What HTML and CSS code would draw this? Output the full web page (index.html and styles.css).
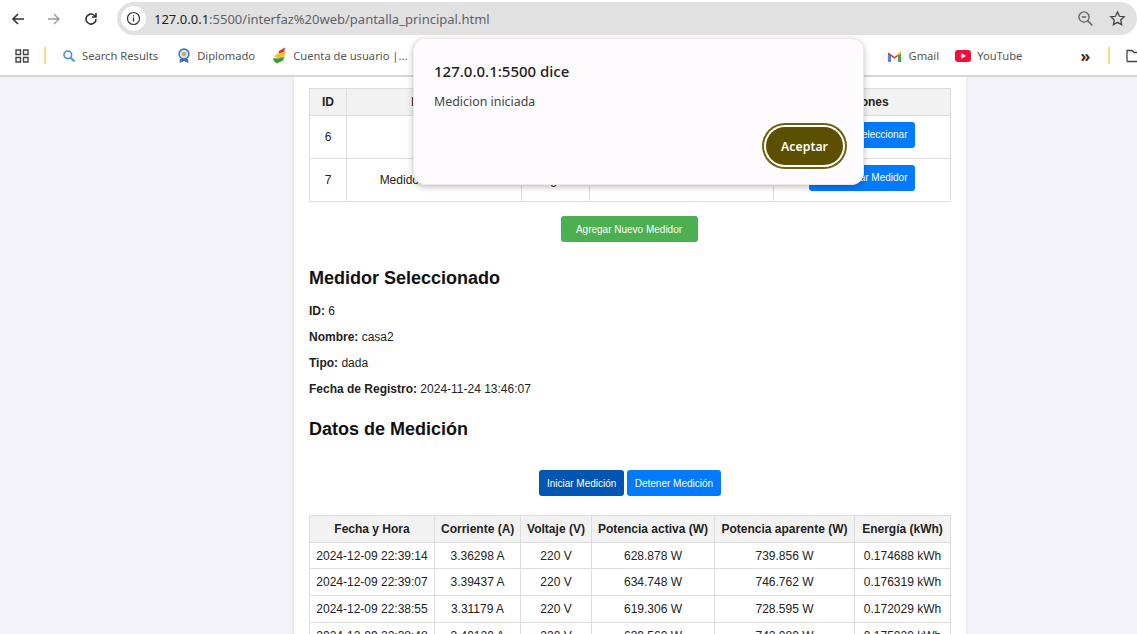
FILE: index.html
```html
<!DOCTYPE html>
<html lang="en">
<head>
    <meta charset="UTF-8">
    <title>Pantalla Principal</title>
    <link rel="stylesheet" href="styles.css">
</head>
<body>
    <header class="browser">
        <div class="toolbar">
            <svg class="nav-icon" viewBox="0 0 16 16"><path d="M14 8H3M8 3L3 8l5 5" fill="none" stroke="#333" stroke-width="1.6"/></svg>
            <svg class="nav-icon" viewBox="0 0 16 16"><path d="M2 8h11M8 3l5 5-5 5" fill="none" stroke="#999" stroke-width="1.4"/></svg>
            <svg class="nav-icon nav-reload" viewBox="0 0 16 16"><path d="M13 8a5 5 0 1 1-1.5-3.5L13 6M13 2v4H9" fill="none" stroke="#333" stroke-width="1.6"/></svg>
            <div class="omnibox">
                <span class="site-info">
                    <svg viewBox="0 0 16 16" width="15" height="15"><circle cx="8" cy="8" r="6.4" fill="none" stroke="#333" stroke-width="1.3"/><path d="M8 7v4.2M8 4.4v1.5" stroke="#333" stroke-width="1.4"/></svg>
                </span>
                <span class="url"><b>127.0.0.1</b>:5500/interfaz%20web/pantalla_principal.html</span>
                <svg class="omni-icon" viewBox="0 0 16 16"><circle cx="6.6" cy="6.6" r="4.8" fill="none" stroke="#666" stroke-width="1.3"/><path d="M10 10l4.5 4.5M4.5 6.6h4.2" stroke="#666" stroke-width="1.4"/></svg>
                <svg class="omni-icon" viewBox="0 0 16 16"><path d="M8 1.8l1.9 4.1 4.4.5-3.3 3 .9 4.4L8 11.6l-3.9 2.2.9-4.4-3.3-3 4.4-.5z" fill="none" stroke="#444" stroke-width="1.2"/></svg>
            </div>
        </div>
        <div class="bookmarks">
            <svg class="apps" viewBox="0 0 14 14"><path d="M1 1h4.5v4.5H1zM8.500 1H13v4.500H8.500zM1 8.500h4.500V13H1zM8.500 8.500H13V13H8.500z" fill="none" stroke="#444" stroke-width="1.4"/></svg>
            <span class="divider"></span>
            <a class="mark mark-search"><svg viewBox="0 0 14 14" width="14" height="14"><circle cx="5.800" cy="5.800" r="3.800" fill="none" stroke="#4a90e2" stroke-width="1.600"/><path d="M8.500 8.500l4 4" stroke="#4a90e2" stroke-width="1.800"/></svg>Search Results</a>
            <a class="mark mark-diplomado"><svg viewBox="0 0 14 16" width="14" height="16"><circle cx="7" cy="6" r="5" fill="#cfe0f2" stroke="#3f6fa8" stroke-width="1.400"/><circle cx="7" cy="6" r="2" fill="#c9a63d"/><path d="M3 11l-.5 4L7 13l4.500 2-.5-4" fill="#3f6fa8"/></svg>Diplomado</a>
            <a class="mark mark-cuenta"><svg viewBox="0 0 15 17" width="15" height="17"><path d="M7 4l6-3.500-.5 4L6 8z" fill="#d8382b"/><path d="M2 9l5-3 7-1-1.500 4-7 2.500z" fill="#f1c31f"/><path d="M1 11l5 .5 6.500-2-1.500 4-6 3-3-2z" fill="#3f9b3c"/></svg>Cuenta de usuario |...</a>
            <span class="mark-spacer"></span>
            <a class="mark mark-gmail"><svg viewBox="0 0 16 12" width="15" height="12"><path d="M1 12V2l7 5 7-5v10h-3V6L8 9 4 6v6z" fill="#d93025"/><path d="M1 12h3V6L1 3.500z" fill="#4285f4"/><path d="M15 12h-3V6l3-2.500z" fill="#34a853"/><path d="M12 6l3-2.500V1l-3 2z" fill="#fbbc04"/></svg>Gmail</a>
            <a class="mark mark-youtube"><svg viewBox="0 0 16 12" width="16" height="12"><rect width="16" height="12" rx="3" fill="#f00f3c"/><path d="M6.300 3.300v5.400L11 6z" fill="#fff"/></svg>YouTube</a>
            <span class="chevrons">»</span>
            <span class="divider divider-end"></span>
            <svg class="folder" viewBox="0 0 16 14"><path d="M1 12.500V1.500h5l2 2h8M1 12.500h15" fill="none" stroke="#444" stroke-width="1.300"/></svg>
        </div>
    </header>

    <main class="viewport">
        <div class="container">
            <table class="meters">
                <thead>
                    <tr><th class="c-id">ID</th><th class="c-name">Nombre</th><th class="c-type">Tipo</th><th class="c-date">Fecha de Registro</th><th>Acciones</th></tr>
                </thead>
                <tbody>
                    <tr>
                        <td>6</td><td>casa2</td><td>dada</td><td>2024-11-24 13:46:07</td>
                        <td class="c-actions"><button class="btn">Seleccionar</button></td>
                    </tr>
                    <tr>
                        <td>7</td><td>Medidor Residencial</td><td>Digital</td><td>2024-11-24 13:50:12</td>
                        <td class="c-actions"><button class="btn">Seleccionar Medidor</button></td>
                    </tr>
                </tbody>
            </table>

            <div class="center add-row"><button class="btn btn-green">Agregar Nuevo Medidor</button></div>

            <h2>Medidor Seleccionado</h2>
            <p><strong>ID:</strong> 6</p>
            <p><strong>Nombre:</strong> casa2</p>
            <p><strong>Tipo:</strong> dada</p>
            <p><strong>Fecha de Registro:</strong> 2024-11-24 13:46:07</p>

            <h2 class="data-title">Datos de Medición</h2>
            <div class="center actions">
                <button class="btn btn-active">Iniciar Medición</button>
                <button class="btn">Detener Medición</button>
            </div>

            <table class="readings">
                <thead>
                    <tr><th>Fecha y Hora</th><th>Corriente (A)</th><th>Voltaje (V)</th><th>Potencia activa (W)</th><th>Potencia aparente (W)</th><th>Energía (kWh)</th></tr>
                </thead>
                <tbody>
                    <tr><td>2024-12-09 22:39:14</td><td>3.36298 A</td><td>220 V</td><td>628.878 W</td><td>739.856 W</td><td>0.174688 kWh</td></tr>
                    <tr><td>2024-12-09 22:39:07</td><td>3.39437 A</td><td>220 V</td><td>634.748 W</td><td>746.762 W</td><td>0.176319 kWh</td></tr>
                    <tr><td>2024-12-09 22:38:55</td><td>3.31179 A</td><td>220 V</td><td>619.306 W</td><td>728.595 W</td><td>0.172029 kWh</td></tr>
                    <tr><td>2024-12-09 22:38:48</td><td>3.40120 A</td><td>220 V</td><td>630.560 W</td><td>742.080 W</td><td>0.175020 kWh</td></tr>
                </tbody>
            </table>
        </div>
    </main>

    <!-- alert dialog -->
    <div class="dialog">
        <h3>127.0.0.1:5500 dice</h3>
        <p>Medicion iniciada</p>
        <div class="dialog-foot"><button class="accept">Aceptar</button></div>
    </div>
</body>
</html>
```

FILE: styles.css
```css
html, body {
    margin: 0;
    height: 634px;
    overflow: hidden;
}

body {
    font-family: 'Liberation Sans', Arial, sans-serif;
    background: #f3f2f8;
    color: #222;
}

/* Browser chrome */
.browser {
    height: 77px;
    background: #fff;
    border-bottom: 2px solid #d6d6d8;
    box-sizing: border-box;
}

.toolbar {
    display: flex;
    align-items: center;
    height: 37px;
    padding: 0 0 0 10px;
}

.nav-icon {
    width: 16px;
    height: 16px;
    margin-right: 20px;
}

.nav-reload {
    margin-left: 1px;
    margin-right: 19px;
}

.omnibox {
    flex: 1;
    height: 33px;
    margin-left: -1px;
    background: #e1e1e1;
    border-radius: 17px;
    display: flex;
    align-items: center;
    padding: 0 11px 0 4px;
    font-family: 'Noto Sans', sans-serif;
}

.site-info {
    width: 25px;
    height: 25px;
    border-radius: 50%;
    background: #fff;
    display: flex;
    align-items: center;
    justify-content: center;
}

.url {
    flex: 1;
    margin-left: 8px;
    font-size: 13px;
    color: #5f6368;
}

.url b {
    font-weight: 400;
    color: #222;
}

.omni-icon {
    width: 17px;
    height: 17px;
    margin-left: 15px;
}

.bookmarks {
    display: flex;
    align-items: center;
    height: 37px;
    padding-left: 15px;
    font-family: 'Noto Sans', sans-serif;
    font-size: 11.200px;
    color: #555;
    white-space: nowrap;
}

.apps {
    flex: none;
    width: 14px;
    height: 14px;
}

.divider {
    flex: none;
    width: 2px;
    height: 17px;
    margin-left: 15px;
    background: #f7dc7c;
}

.divider-end {
    margin-left: 17px;
}

.mark {
    flex: none;
    display: flex;
    align-items: center;
    gap: 6px;
}

.mark-search { margin-left: 16px; }
.mark-diplomado { margin-left: 19px; }
.mark-cuenta { margin-left: 17px; }
.mark-spacer { flex: none; width: 480px; }
.mark-youtube { margin-left: 16px; }

.chevrons {
    flex: none;
    width: 12px;
    margin-left: 57px;
    text-align: center;
    font-size: 16px;
    font-weight: 700;
    color: #333;
}

.folder {
    flex: none;
    width: 16px;
    height: 14px;
    margin-left: 16px;
}

/* Page */
.viewport {
    height: 557px;
    overflow: hidden;
}

.container {
    width: 642px;
    margin-left: 294px;
    padding: 11px 15px 0;
    background: #fff;
    box-shadow: 0 0 3px rgba(0, 0, 0, 0.1);
    font-size: 12px;
}

table {
    width: 100%;
    border-collapse: collapse;
    table-layout: fixed;
}

th, td {
    border: 1px solid #ddd;
    padding: 0 6px;
    text-align: center;
    color: #222;
}

th {
    background: #f2f2f2;
    font-weight: 700;
}

.meters th { height: 26px; }
.meters td { height: 42px; }
.c-id { width: 24px; }
.c-name { width: 162px; }
.c-type { width: 55px; }
.c-date { width: 171px; }

.meters .c-actions {
    padding-right: 35px;
    text-align: right;
}

.meters .btn {
    margin-bottom: 5px;
}

.readings th { height: 26px; white-space: nowrap; }
.readings td { height: 26px; white-space: nowrap; }
.readings tbody tr:first-child td { height: 25px; }
.readings th:nth-child(1) { width: 112px; }
.readings th:nth-child(2) { width: 73px; }
.readings th:nth-child(3) { width: 58px; }
.readings th:nth-child(4) { width: 110px; }
.readings th:nth-child(5) { width: 127px; }

.btn {
    height: 26px;
    padding: 0 7.500px;
    border: 0;
    border-radius: 3px;
    background: #007bff;
    color: #fff;
    font-family: 'Liberation Sans', Arial, sans-serif;
    font-size: 10px;
    vertical-align: middle;
}

.btn-green {
    width: 137px;
    margin-right: 2px;
    background: #4caf50;
}

.btn-active {
    background: #0056b3;
}

.center {
    text-align: center;
}

.add-row {
    margin-top: 14px;
}

h2 {
    margin: 26px 0 15px;
    font-size: 18px;
    line-height: 21px;
    color: #111;
}

.container p {
    margin: 0 0 12px;
    line-height: 14px;
}

.data-title {
    margin-top: 23px;
}

.actions {
    margin-top: 30px;
    margin-bottom: 19px;
}

/* Alert dialog, over the page */
.dialog {
    position: absolute;
    left: 413px;
    top: 38px;
    width: 451px;
    height: 147px;
    box-sizing: border-box;
    padding: 24px 20px 0 20px;
    background: #fefbfe;
    border: 1px solid #eee9e2;
    border-radius: 12px;
    box-shadow: 0 2px 6px rgba(0, 0, 0, 0.25);
    font-family: 'Noto Sans', sans-serif;
}

.dialog h3 {
    margin: 0;
    font-size: 15px;
    line-height: 17px;
    font-weight: 500;
    color: #222;
}

.dialog p {
    margin: 14px 0 0;
    font-size: 12.400px;
    line-height: 16px;
    color: #444;
}

.dialog-foot {
    display: flex;
    justify-content: flex-end;
    margin-top: 17px;
}

.accept {
    width: 77px;
    height: 38px;
    border: 0;
    border-radius: 19px;
    background: #5c5000;
    color: #fff;
    font-family: 'Noto Sans', sans-serif;
    font-size: 12.300px;
    font-weight: 600;
    box-shadow: 0 0 0 2px #fff, 0 0 0 4px #6d6010;
}
```
